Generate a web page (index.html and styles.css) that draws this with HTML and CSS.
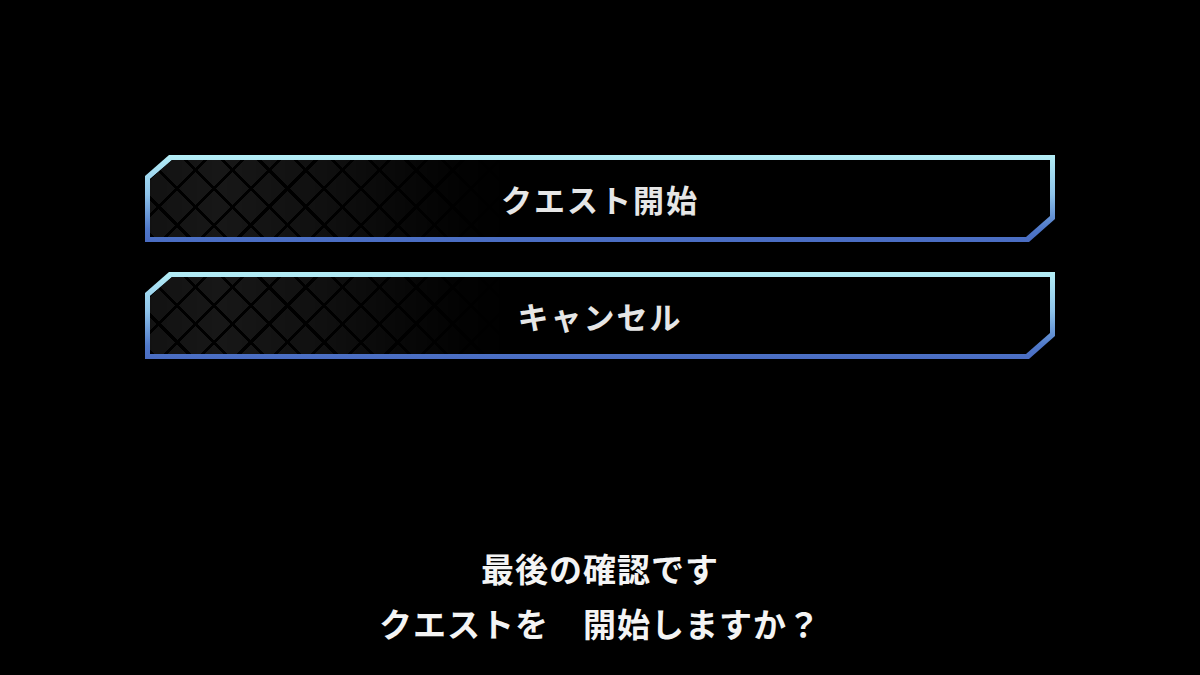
FILE: index.html
```html
<!DOCTYPE html>
<html lang="ja">
<head>
<meta charset="utf-8">
<link rel="stylesheet" href="styles.css">
</head>
<body>
<main class="screen">
  <div class="menu">
    <button class="btn"><span class="btn-inner"><span class="btn-label">クエスト開始</span></span></button>
    <button class="btn"><span class="btn-inner"><span class="btn-label">キャンセル</span></span></button>
  </div>
  <div class="message">
    <p class="line">最後の確認です</p>
    <p class="line">クエストを　開始しますか？</p>
  </div>
</main>
</body>
</html>
```
FILE: styles.css
```css
html, body {
  margin: 0;
  padding: 0;
  background: #000;
}
.screen {
  width: 1200px;
  height: 675px;
  box-sizing: border-box;
  padding-top: 155px;
  display: flex;
  flex-direction: column;
  align-items: center;
  font-family: "Noto Sans CJK JP", "Noto Sans", sans-serif;
  font-weight: 700;
  color: #f2f2f2;
}
.menu {
  display: flex;
  flex-direction: column;
  gap: 30px;
}
.btn {
  display: block;
  width: 910px;
  height: 87px;
  border: 0;
  padding: 5px;
  margin: 0;
  box-sizing: border-box;
  background: linear-gradient(to bottom, #b4eef6 0%, #8ec4ea 45%, #4f78c9 85%, #4a6cc2 100%);
  clip-path: polygon(24px 0, 100% 0, 100% calc(100% - 23px), calc(100% - 26px) 100%, 0 100%, 0 21px);
  font: inherit;
  color: inherit;
  cursor: pointer;
}
.btn-inner {
  position: relative;
  display: flex;
  align-items: center;
  justify-content: center;
  width: 100%;
  height: 100%;
  background: #000;
  clip-path: polygon(22px 0, 100% 0, 100% calc(100% - 21px), calc(100% - 24px) 100%, 0 100%, 0 19px);
  overflow: hidden;
}
.btn-inner::before {
  content: "";
  position: absolute;
  inset: 0;
  background:
    repeating-linear-gradient(45deg, #000 0 3px, transparent 3px 26px),
    repeating-linear-gradient(-45deg, #000 0 3px, transparent 3px 26px),
    #171717;
  -webkit-mask-image: linear-gradient(to right, rgba(0,0,0,0.8) 0, #000 70px, rgba(0,0,0,0.7) 170px, rgba(0,0,0,0.35) 250px, rgba(0,0,0,0.1) 310px, transparent 360px);
  mask-image: linear-gradient(to right, rgba(0,0,0,0.8) 0, #000 70px, rgba(0,0,0,0.7) 170px, rgba(0,0,0,0.35) 250px, rgba(0,0,0,0.1) 310px, transparent 360px);
}
.btn-label {
  position: relative;
  font-size: 31px;
  line-height: 1;
  letter-spacing: 2px;
  color: #e6e6e6;
  text-shadow: 0 0 2px rgba(0,0,0,0.8);
}
.message {
  margin-top: 182px;
  text-align: center;
}
.line {
  margin: 0;
  font-size: 33px;
  line-height: 55px;
  letter-spacing: 1px;
  color: #f4f4f4;
}
```
